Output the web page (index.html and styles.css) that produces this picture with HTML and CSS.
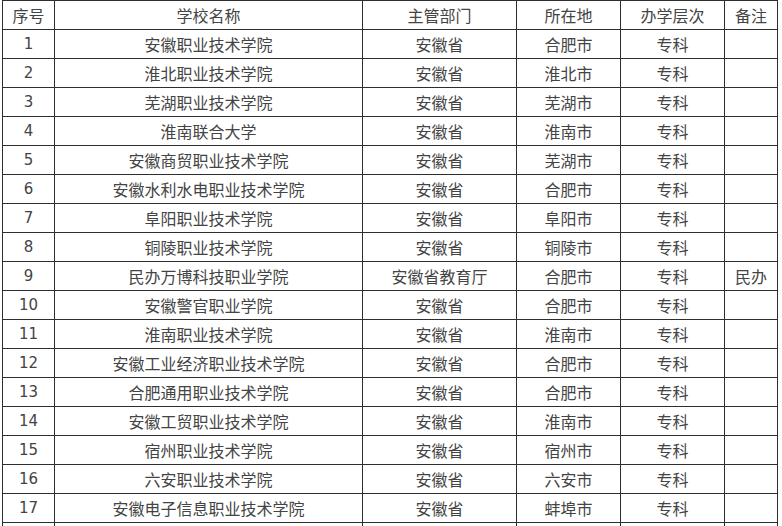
FILE: index.html
```html
<!DOCTYPE html>
<html lang="zh-CN">
<head>
<meta charset="utf-8">
<title>安徽高职院校名单</title>
<link rel="stylesheet" href="styles.css">
</head>
<body>
<table class="list">
  <colgroup>
    <col class="c-no">
    <col class="c-name">
    <col class="c-dept">
    <col class="c-city">
    <col class="c-level">
    <col class="c-note">
  </colgroup>
  <thead>
    <tr><th>序号</th><th>学校名称</th><th>主管部门</th><th>所在地</th><th>办学层次</th><th>备注</th></tr>
  </thead>
  <tbody>
    <tr><td class="num">1</td><td>安徽职业技术学院</td><td>安徽省</td><td>合肥市</td><td>专科</td><td></td></tr>
    <tr><td class="num">2</td><td>淮北职业技术学院</td><td>安徽省</td><td>淮北市</td><td>专科</td><td></td></tr>
    <tr><td class="num">3</td><td>芜湖职业技术学院</td><td>安徽省</td><td>芜湖市</td><td>专科</td><td></td></tr>
    <tr><td class="num">4</td><td>淮南联合大学</td><td>安徽省</td><td>淮南市</td><td>专科</td><td></td></tr>
    <tr><td class="num">5</td><td>安徽商贸职业技术学院</td><td>安徽省</td><td>芜湖市</td><td>专科</td><td></td></tr>
    <tr><td class="num">6</td><td>安徽水利水电职业技术学院</td><td>安徽省</td><td>合肥市</td><td>专科</td><td></td></tr>
    <tr><td class="num">7</td><td>阜阳职业技术学院</td><td>安徽省</td><td>阜阳市</td><td>专科</td><td></td></tr>
    <tr><td class="num">8</td><td>铜陵职业技术学院</td><td>安徽省</td><td>铜陵市</td><td>专科</td><td></td></tr>
    <tr><td class="num">9</td><td>民办万博科技职业学院</td><td>安徽省教育厅</td><td>合肥市</td><td>专科</td><td>民办</td></tr>
    <tr><td class="num">10</td><td>安徽警官职业学院</td><td>安徽省</td><td>合肥市</td><td>专科</td><td></td></tr>
    <tr><td class="num">11</td><td>淮南职业技术学院</td><td>安徽省</td><td>淮南市</td><td>专科</td><td></td></tr>
    <tr><td class="num">12</td><td>安徽工业经济职业技术学院</td><td>安徽省</td><td>合肥市</td><td>专科</td><td></td></tr>
    <tr><td class="num">13</td><td>合肥通用职业技术学院</td><td>安徽省</td><td>合肥市</td><td>专科</td><td></td></tr>
    <tr><td class="num">14</td><td>安徽工贸职业技术学院</td><td>安徽省</td><td>淮南市</td><td>专科</td><td></td></tr>
    <tr><td class="num">15</td><td>宿州职业技术学院</td><td>安徽省</td><td>宿州市</td><td>专科</td><td></td></tr>
    <tr><td class="num">16</td><td>六安职业技术学院</td><td>安徽省</td><td>六安市</td><td>专科</td><td></td></tr>
    <tr><td class="num">17</td><td>安徽电子信息职业技术学院</td><td>安徽省</td><td>蚌埠市</td><td>专科</td><td></td></tr>
    <tr><td class="num"></td><td></td><td></td><td></td><td></td><td></td></tr>
  </tbody>
</table>
</body>
</html>
```

FILE: styles.css
```css
html, body {
  margin: 0;
  padding: 0;
  background: #ffffff;
}

body {
  font-family: "Noto Sans CJK SC", "Noto Sans", sans-serif;
  color: #444444;
  font-size: 16px;
}

.list {
  border-collapse: collapse;
  table-layout: fixed;
  width: 776px;
  margin: 0 0 0 2px;
}

.c-no { width: 52px; }
.c-name { width: 308px; }
.c-dept { width: 154px; }
.c-city { width: 104px; }
.c-level { width: 104px; }
.c-note { width: 53px; }

.list th,
.list td {
  border: 1px solid #2e2e2e;
  height: 28px;
  padding: 0;
  text-align: center;
  vertical-align: middle;
  font-weight: normal;
  font-size: 16px;
  line-height: 28px;
  white-space: nowrap;
  overflow: hidden;
}

.list td.num {
  font-family: "DejaVu Sans", sans-serif;
  font-size: 15px;
}
```
